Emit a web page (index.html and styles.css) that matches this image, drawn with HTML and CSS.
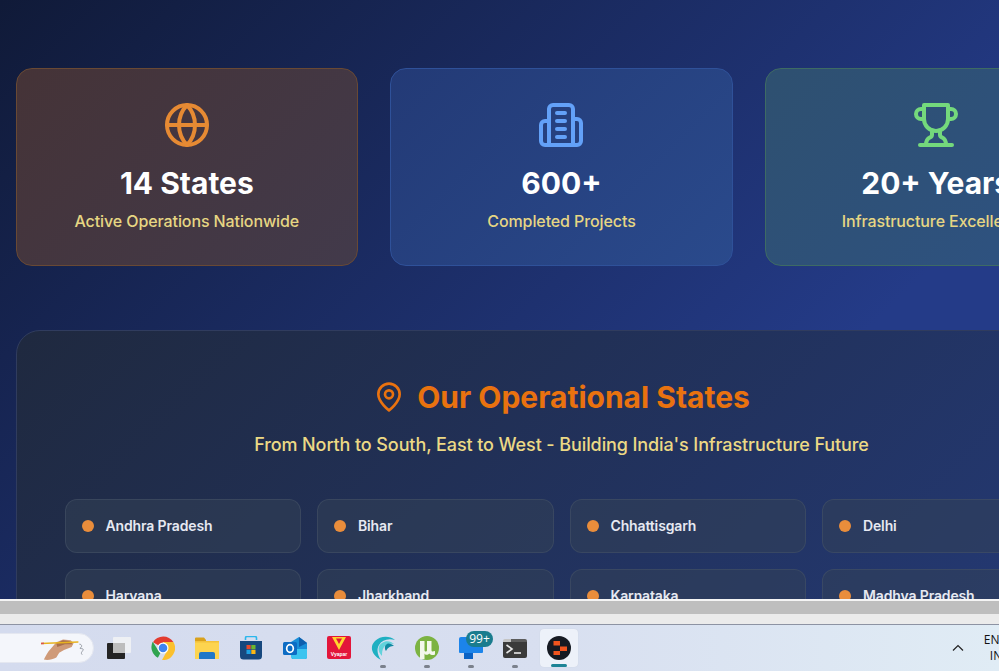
FILE: index.html
```html
<!DOCTYPE html>
<html lang="en">
<head>
<meta charset="utf-8">
<title>Operational States</title>
<link rel="stylesheet" href="styles.css">
</head>
<body>
<div class="screen">
  <div class="viewport">
    <main class="page">
      <section class="stats">
        <article class="stat stat-orange">
          <svg class="stat-icon" viewBox="0 0 24 24"><circle cx="12" cy="12" r="10"/><path d="M12 2a14.5 14.5 0 0 0 0 20 14.5 14.5 0 0 0 0-20"/><path d="M2 12h20"/></svg>
          <h3 class="stat-value">14 States</h3>
          <p class="stat-label">Active Operations Nationwide</p>
        </article>
        <article class="stat stat-blue">
          <svg class="stat-icon" viewBox="0 0 24 24"><path d="M6 22V4a2 2 0 0 1 2-2h8a2 2 0 0 1 2 2v18Z"/><path d="M6 10H4a2 2 0 0 0-2 2v8a2 2 0 0 0 2 2h2"/><path d="M18 9h2a2 2 0 0 1 2 2v9a2 2 0 0 1-2 2h-2"/><path d="M10 6h4"/><path d="M10 10h4"/><path d="M10 14h4"/><path d="M10 18h4"/></svg>
          <h3 class="stat-value">600+</h3>
          <p class="stat-label">Completed Projects</p>
        </article>
        <article class="stat stat-green">
          <svg class="stat-icon" viewBox="0 0 24 24"><path d="M6 9H4.5a2.5 2.5 0 0 1 0-5H6"/><path d="M18 9h1.5a2.5 2.5 0 0 0 0-5H18"/><path d="M4 22h16"/><path d="M10 14.66V17c0 .55-.47.98-.97 1.21C7.85 18.75 7 20.24 7 22"/><path d="M14 14.66V17c0 .55.47.98.97 1.21C16.15 18.75 17 20.24 17 22"/><path d="M18 2H6v7a6 6 0 0 0 12 0V2Z"/></svg>
          <h3 class="stat-value">20+ Years</h3>
          <p class="stat-label">Infrastructure Excellence</p>
        </article>
      </section>
      <section class="panel">
        <h2 class="panel-title">
          <svg class="pin" viewBox="0 0 24 24"><path d="M20 10c0 6-8 12-8 12s-8-6-8-12a8 8 0 0 1 16 0Z"/><circle cx="12" cy="10" r="3"/></svg>
          Our Operational States
        </h2>
        <p class="panel-sub">From North to South, East to West - Building India's Infrastructure Future</p>
        <ul class="states">
          <li class="state"><span class="dot"></span>Andhra Pradesh</li>
          <li class="state"><span class="dot"></span>Bihar</li>
          <li class="state"><span class="dot"></span>Chhattisgarh</li>
          <li class="state"><span class="dot"></span>Delhi</li>
          <li class="state"><span class="dot"></span>Haryana</li>
          <li class="state"><span class="dot"></span>Jharkhand</li>
          <li class="state"><span class="dot"></span>Karnataka</li>
          <li class="state"><span class="dot"></span>Madhya Pradesh</li>
        </ul>
      </section>
    </main>
  </div>
  <div class="bar-white"></div>
  <div class="bar-grey"></div>
  <div class="bar-light"></div>
  <footer class="taskbar">
    <div class="search">
      <svg class="doodle" viewBox="0 0 48 26">
        <path d="M3 25c2-4 4-8 7-11l6-7 7-3 8 1 3 3-2 4-8 3-5 3-3 5c-4 2-9 3-13 2Z" fill="#cf9a78"/>
        <path d="M16 8l7-3 7 1 3 3-8 0-8 3Z" fill="#a96f4c"/>
        <path d="M0 7.500l39-1.500v1.600L0 9.200Z" fill="#e8b21f"/>
        <path d="M0 7.500l3-.2v1.700l-3 .2Z" fill="#d9534f"/>
        <path d="M40 9c3 0 3 3 1 4s4 0 3 2-3 3-1 5" fill="none" stroke="#7f858f" stroke-width=".8"/>
      </svg>
    </div>
    <div class="tasks">
      <div class="task">
        <svg viewBox="0 0 24 24"><rect x="0" y="7" width="18" height="16" rx="1" fill="#242424"/><rect x="6" y="1" width="18" height="16" rx="1" fill="#eef0f4"/><rect x="6" y="7" width="12" height="10" fill="#bdbdbd"/></svg>
      </div>
      <div class="task">
        <svg viewBox="0 0 24 24"><path d="M12 12 2 6.300A12 12 0 0 1 22.400 6H12Z" fill="#e33b2e"/><path d="M12 12 6.900 21.800A12 12 0 0 1 1.700 5.800L7 14Z" fill="#2fa34f"/><path d="M12 6h10.400A12 12 0 0 1 11 24l5.500-10Z" fill="#fbc02d"/><circle cx="12" cy="12" r="5.500" fill="#fff"/><circle cx="12" cy="12" r="4.300" fill="#3f83f0"/></svg>
      </div>
      <div class="task">
        <svg viewBox="0 0 24 24"><path d="M0 2.500A1 1 0 0 1 1 1.500h8l2 2.500v4H0Z" fill="#d9a11c"/><path d="M0 5h24v18H0Z" fill="#fdd44f"/><rect x="0" y="5" width="24" height="1.500" fill="#f4c23a"/><path d="M4 18a2 2 0 0 1 2-2h12a2 2 0 0 1 2 2v5H4Z" fill="#1f78c8"/></svg>
      </div>
      <div class="task">
        <svg viewBox="0 0 24 24"><path d="M6.500 4V2a1.500 1.500 0 0 1 1.500-1.500h8A1.500 1.500 0 0 1 17.500 2v2" fill="none" stroke="#2cb7ec" stroke-width="1.600"/><path d="M1 5h22v15a3.500 3.500 0 0 1-3.500 3.500h-15A3.500 3.500 0 0 1 1 20Z" fill="#17487e"/><rect x="7.500" y="9" width="4.200" height="4.200" fill="#e8492b"/><rect x="12.300" y="9" width="4.200" height="4.200" fill="#6fb52c"/><rect x="7.500" y="13.800" width="4.200" height="4.200" fill="#1da1e2"/><rect x="12.300" y="13.800" width="4.200" height="4.200" fill="#fcb713"/></svg>
      </div>
      <div class="task">
        <svg viewBox="0 0 24 24"><path d="M8 6 16 1l8 6v14a2 2 0 0 1-2 2H9Z" fill="#1a8fd9"/><path d="M16 1l8 6-8 4Z" fill="#0f5fae"/><path d="M8 13h16v8a2 2 0 0 1-2 2H10a2 2 0 0 1-2-2Z" fill="#3cc4ef"/><rect x="0" y="6" width="14" height="13" rx="1.500" fill="#0d6cc4"/><ellipse cx="7" cy="12.500" rx="3.300" ry="3.800" fill="none" stroke="#fff" stroke-width="1.700"/></svg>
      </div>
      <div class="task">
        <svg viewBox="0 0 24 24"><rect x="0" y="0" width="24" height="23" rx="2" fill="#e3163a"/><path d="M5 1h14l-7 13Z" fill="#ffd62e"/><path d="M9 2.500h6L12 8Z" fill="#e3163a"/><text class="vyapar" x="12" y="20" text-anchor="middle">Vyapar</text></svg>
      </div>
      <div class="task has-pip">
        <svg viewBox="0 0 24 24"><path d="M10 24C1 19-2 11 4 5 9 0 18-1 24 4 17 2 11 4 8 9c-3 5-1 11 2 15Z" fill="#1fb0c2"/><path d="M11 20C6 15 7 9 11 7c4-3 9-2 12 1-5-1-8 0-10 3-2 3-2 6-2 9Z" fill="#62d3dc"/><path d="M15 15c-2-3-1-6 1-7 2-1 5 0 7 2-3 0-6 1-8 5Z" fill="#108aa2"/></svg>
      </div>
      <div class="task has-pip">
        <svg viewBox="0 0 24 24"><circle cx="12" cy="12" r="12" fill="#7cb342"/><path d="M5 5h4.500v9c0 2 2.500 2 2.500 0V5h4.500v9c0 1 .5 1.500 1 1.500l2.500-.5v3.500c-2 1-5 .5-5.500-1-2 2-4.500 1.500-5 0V23H5Z" fill="#f4f8ec"/></svg>
      </div>
      <div class="task has-pip">
        <svg viewBox="0 0 24 24"><path d="M0 3a2 2 0 0 1 2-2h20a2 2 0 0 1 2 2v13a1 1 0 0 1-1 1H1a1 1 0 0 1-1-1Z" fill="#1c84ea"/><rect x="5" y="17" width="9" height="6" fill="#0b62c4"/></svg>
        <span class="badge">99+</span>
      </div>
      <div class="task has-pip">
        <svg viewBox="0 0 24 24"><path d="M0 5h24v15a2 2 0 0 1-2 2H2a2 2 0 0 1-2-2Z" fill="#3a3a3a"/><path d="M0 5a2 2 0 0 1 2-2h6v3H0Z" fill="#c4c4c4"/><path d="M8 3h14a2 2 0 0 1 2 2v1H8Z" fill="#5c5c5c"/><path d="M3.500 9 9 13l-5.500 4" fill="none" stroke="#e8e8e8" stroke-width="1.600"/><path d="M11 17h7" stroke="#e8e8e8" stroke-width="1.600"/></svg>
      </div>
      <div class="task task-active">
        <svg viewBox="0 0 24 24"><circle cx="12" cy="12" r="12" fill="#161a22"/><rect x="6.500" y="5" width="6.500" height="4.500" fill="#f0541e"/><rect x="13" y="10.500" width="7" height="4.500" fill="#f0541e"/><rect x="6.500" y="15" width="6.500" height="4" fill="#f0541e"/></svg>
      </div>
    </div>
    <div class="tray">
      <svg class="chevron" viewBox="0 0 12 8"><path d="M1 6.500 6 1.500l5 5"/></svg>
      <div class="lang"><span>ENG</span><span>IN</span></div>
    </div>
  </footer>
</div>
</body>
</html>
```

FILE: styles.css
```css
* {
  box-sizing: border-box;
  margin: 0;
  padding: 0;
}

html,
body {
  height: 100%;
  overflow: hidden;
}

body {
  font-family: Inter, "Liberation Sans", sans-serif;
}

.screen {
  display: flex;
  flex-direction: column;
  height: 671px;
  overflow: hidden;
}

.viewport {
  height: 599px;
  flex: none;
  overflow: hidden;
  background: linear-gradient(135deg, #101a38 0%, #243b88 75%);
}

.page {
  width: 1123px;
  padding: 68px 15.5px 0;
}

.stats {
  display: grid;
  grid-template-columns: repeat(3, 1fr);
  gap: 32px;
  margin-bottom: 64px;
}

.stat {
  display: flex;
  flex-direction: column;
  align-items: center;
  padding: 32px;
  border: 1px solid;
  border-radius: 16px;
  text-align: center;
}

.stat-orange {
  background: linear-gradient(135deg, #453337, #423a4b);
  border-color: #694934;
}

.stat-blue {
  background: linear-gradient(135deg, #233a76, #2a4a8c);
  border-color: #2f5199;
}

.stat-green {
  background: linear-gradient(135deg, #2e5070, #2e5283);
  border-color: #3e6b63;
}

.stat-icon {
  width: 48px;
  height: 48px;
  margin-bottom: 16px;
  fill: none;
  stroke-width: 2;
  stroke-linecap: round;
  stroke-linejoin: round;
}

.stat-orange .stat-icon {
  stroke: #e68a33;
}

.stat-blue .stat-icon {
  stroke: #63a1f8;
}

.stat-green .stat-icon {
  stroke: #74d97c;
}

.stat-value {
  margin-bottom: 8px;
  font-size: 30px;
  line-height: 36px;
  font-weight: 700;
  color: #fff;
  white-space: nowrap;
}

.stat-label {
  font-size: 16px;
  line-height: 24px;
  font-weight: 500;
  letter-spacing: -0.1px;
  color: #e6d683;
  white-space: nowrap;
}

.panel {
  padding: 48px;
  border: 1px solid #303c5e;
  border-radius: 24px;
  background: linear-gradient(135deg, #1f293f, #243a78);
}

.panel-title {
  display: flex;
  justify-content: center;
  align-items: center;
  gap: 12px;
  margin-bottom: 16px;
  font-size: 30px;
  line-height: 36px;
  font-weight: 700;
  color: #e9720f;
}

.pin {
  width: 32px;
  height: 32px;
  fill: none;
  stroke: #e9720f;
  stroke-width: 2;
  stroke-linecap: round;
  stroke-linejoin: round;
}

.panel-sub {
  margin-bottom: 40px;
  font-size: 18px;
  line-height: 28px;
  font-weight: 500;
  letter-spacing: -0.1px;
  text-align: center;
  color: #ecd985;
}

.states {
  display: grid;
  grid-template-columns: repeat(4, 1fr);
  gap: 16px;
  list-style: none;
}

.state {
  display: flex;
  align-items: center;
  gap: 12px;
  padding: 16px;
  border: 1px solid rgba(71, 85, 105, 0.5);
  border-radius: 12px;
  background: rgba(51, 65, 85, 0.5);
  font-size: 14px;
  line-height: 20px;
  font-weight: 600;
  letter-spacing: -0.14px;
  color: #e6e9f2;
}

.dot {
  width: 12px;
  height: 12px;
  flex: none;
  border-radius: 50%;
  background: #e98d3b;
}

.bar-white {
  height: 2px;
  flex: none;
  background: #f4f4f4;
}

.bar-grey {
  height: 13px;
  flex: none;
  background: #bebebe;
}

.bar-light {
  height: 10px;
  flex: none;
  background: #ebebeb;
}

.taskbar {
  display: flex;
  align-items: center;
  flex: 1;
  overflow: hidden;
  border-top: 1px solid #8d93a3;
  background: linear-gradient(90deg, #d4dbee 0%, #d8dff0 55%, #e0ecf5 100%);
}

.search {
  display: flex;
  align-items: center;
  justify-content: flex-end;
  flex: none;
  width: 114px;
  height: 30px;
  margin-left: -20px;
  padding-right: 6px;
  border: 1px solid #e4e7f0;
  border-radius: 15px;
  background: #f4f6fb;
}

.doodle {
  width: 46px;
  height: 26px;
}

.tasks {
  display: flex;
  gap: 20px;
  margin-left: 13px;
}

.task {
  position: relative;
  width: 24px;
  height: 24px;
  flex: none;
}

.task svg {
  display: block;
  position: relative;
  width: 24px;
  height: 24px;
}

.vyapar {
  font-family: "Liberation Sans", sans-serif;
  font-size: 5px;
  font-weight: 700;
  fill: #fff;
}

.has-pip::after {
  content: "";
  position: absolute;
  left: 9px;
  top: 29px;
  width: 6px;
  height: 3px;
  border-radius: 2px;
  background: #7b818c;
}

.task-active::before {
  content: "";
  position: absolute;
  inset: -7px;
  border-radius: 4px;
  background: #edf1f9;
  box-shadow: 0 0 1px #c4cad8;
}

.task-active::after {
  content: "";
  position: absolute;
  left: 4px;
  top: 28px;
  width: 16px;
  height: 3px;
  border-radius: 2px;
  background: #1d8496;
}

.badge {
  position: absolute;
  left: 7px;
  top: -5px;
  width: 27px;
  height: 16px;
  border-radius: 8px;
  background: #1a7c8e;
  font-family: "Open Sans", sans-serif;
  font-size: 12px;
  line-height: 16px;
  text-align: center;
  color: #fff;
}

.tray {
  display: flex;
  align-items: center;
  flex: none;
  margin-left: auto;
  margin-right: -9px;
}

.chevron {
  width: 12px;
  height: 8px;
  margin-right: 20px;
  fill: none;
  stroke: #222;
  stroke-width: 1.2;
}

.lang {
  display: flex;
  flex-direction: column;
  align-items: center;
  width: 24px;
  font-family: "Open Sans", sans-serif;
  font-size: 12px;
  line-height: 16px;
  color: #111;
}
```
